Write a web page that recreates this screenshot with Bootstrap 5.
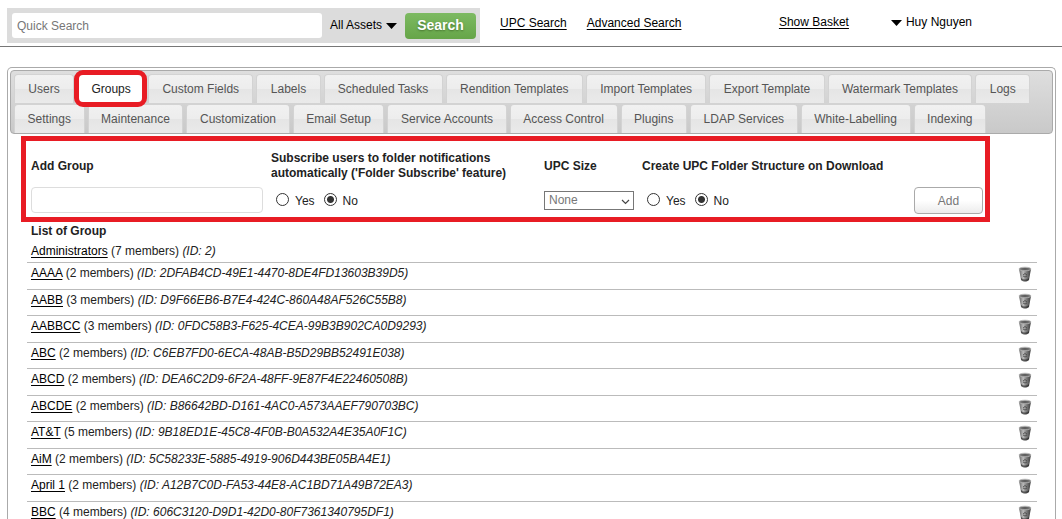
<!DOCTYPE html>
<html lang="en">
<head>
<meta charset="utf-8">
<meta name="viewport" content="width=device-width, initial-scale=1">
<title>Groups</title>
<link href="https://cdn.jsdelivr.net/npm/bootstrap@5.3.0/dist/css/bootstrap.min.css" rel="stylesheet">
<style>
body{font-family:"Liberation Sans",Arial,sans-serif;font-size:12px;line-height:15px;color:#222;background:#fff}
a,a:hover{color:#000}
.topbar{height:47px;border-bottom:1px solid #777;padding-left:7px}
.searchbox{background:#dcdcdc;height:35px;margin-top:8px;width:473px;padding:0 4px 0 5px}
.searchbox .form-control{height:25px;width:310px;font-size:12px;border:0;border-radius:3px;padding:0 5px;color:#555}
.form-control::placeholder{color:#777}
.plain{background:none;border:0;padding:0;color:#000;white-space:nowrap}
.caretdown{width:11px;height:6px;flex:none}
.btn-search{width:71px;height:26px;padding:0;border:0;border-radius:4px;background:linear-gradient(#7dba62,#66a548);color:#fff;font-size:14px;font-weight:bold;text-shadow:0 1px 2px #47742f}
.toplinks{padding-top:16px}
.toplinks a,.account a{text-underline-offset:2px}
.account{padding-right:90px;gap:42px;padding-top:15px}
.frame{margin:20px 6px 0 7px;border:1px solid #aaa;border-bottom:0;border-radius:5px 5px 0 0;padding:2px 2px 0}
.tabstrip{border:1px solid #aaa;border-radius:4px;background:linear-gradient(#dedede,#c9c9c9);padding:3px 0 0 3px;row-gap:1px}
.tabrow{gap:3px;padding-right:22px}
.tabrow + .tabrow{padding-right:66px}
.tabrow a{flex:1 1 auto;text-align:center;height:29px;line-height:28px;padding:0 12px;border:1px solid #d3d3d3;border-bottom:0;border-radius:4px 4px 0 0;background:linear-gradient(#f1f1f1 0,#ededed 50%,#e5e5e5 51%,#eaeaea);color:#555;text-decoration:none;white-space:nowrap}
.tabrow a.current{position:relative;background:#fff;color:#212121}
.tabrow a.current::after{content:"";position:absolute;inset:-5px -3px -4px -4px;border:5px solid #e81c24;border-radius:9px}
.addform{margin:2px 63px 0 11px;border:5px solid #e81c24;padding:0 2px 3px 5px;height:86px}
.addgrid{display:grid;grid-template-columns:240fr 273fr 98fr 272fr 69px;grid-template-rows:46px 27px}
.addgrid .head{font-weight:bold;align-self:center;padding-top:4px}
.addgrid .form-control{width:232px;height:26px;padding:0 5px;font-size:12px;border:1px solid #ddd;border-radius:4px}
.radios{gap:6px;padding:0 0 2px 5px}
.radios input{appearance:none;width:13px;height:13px;margin:0;border:1px solid #333;border-radius:50%;background:#fff}
.radios input:checked{background:radial-gradient(circle,#333 0 3px,#fff 4px)}
.radios label{padding-top:3px;margin-right:3px}
.sizebox{position:relative;width:90px;height:19px}
.sizebox select{appearance:none;display:block;width:90px;height:19px;padding:0 4px;border:1px solid #777;border-radius:0;background:#fff;color:#777;line-height:15px}
.sizebox svg{position:absolute;right:4px;top:8px;width:9px;height:6px;pointer-events:none}
.btn-add{width:69px;height:27px;padding:0;font-size:12px;color:#777;border:1px solid #aaa;border-radius:4px;background:linear-gradient(#fff 50%,#ececec)}
.groups{margin:2px 16px 0 17px}
.groups h1{font-size:12px;line-height:15px;font-weight:bold;margin:0;padding:0 4px 5px}
.groups li{height:26px;padding:3px 5px 0 4px;border-top:1px solid #bbb}
.groups li:nth-child(even){height:27px}
.groups li:first-child{height:18px;padding-top:0;border:0}
.groups a{text-underline-offset:2px}
.trash{width:14px;height:17px}
</style>
</head>
<body>
<svg class="position-absolute" width="0" height="0" aria-hidden="true">
<defs><linearGradient id="metal"><stop offset="0" stop-color="#666"/><stop offset=".35" stop-color="#bbb"/><stop offset=".6" stop-color="#808080"/><stop offset="1" stop-color="#3c3c3c"/></linearGradient></defs>
<symbol id="bin" viewBox="0 0 14 17"><path d="M1 3 3 14Q7 17 11 14L13 3Z" fill="url(#metal)"/><path d="M3 12Q7 15 11 12L11 14Q7 17 3 14Z" fill="#222" opacity=".6"/><ellipse cx="7" cy="3" rx="6" ry="1.800" fill="#777" stroke="#b5b5b5" stroke-width=".8"/><path d="M3 3Q7 1.500 11 3Q7 4.500 3 3" fill="#555"/><path d="M5 9Q7 6 9 9M5 10 7 11 9 10" stroke="#444" stroke-width=".8" fill="none"/></symbol>
<symbol id="down" viewBox="0 0 11 6"><path d="M0 0H11L5.500 6Z"/></symbol>
</svg>
<header class="topbar d-flex align-items-start">
<form class="searchbox d-flex align-items-center justify-content-between">
<input class="form-control" type="search" placeholder="Quick Search" aria-label="Quick Search">
<button type="button" class="plain d-flex align-items-center gap-1">All Assets <svg class="caretdown"><use href="#down"/></svg></button>
<button type="submit" class="btn btn-search">Search</button>
</form>
<nav class="toplinks d-flex flex-grow-1">
<a href="#" class="ms-3 ps-1">UPC Search</a><a href="#" class="ms-3 ps-1">Advanced Search</a>
</nav>
<nav class="account d-flex"><a href="#">Show Basket</a><button type="button" class="plain d-flex align-items-center gap-1"><svg class="caretdown"><use href="#down"/></svg>Huy Nguyen</button></nav>
</header>
<main class="frame">
<nav class="tabstrip d-flex flex-column" aria-label="Administration">
<div class="tabrow d-flex"><a href="#">Users</a><a href="#" class="current" aria-current="page">Groups</a><a href="#">Custom Fields</a><a href="#">Labels</a><a href="#">Scheduled Tasks</a><a href="#">Rendition Templates</a><a href="#">Import Templates</a><a href="#">Export Template</a><a href="#">Watermark Templates</a><a href="#">Logs</a></div>
<div class="tabrow d-flex"><a href="#">Settings</a><a href="#">Maintenance</a><a href="#">Customization</a><a href="#">Email Setup</a><a href="#">Service Accounts</a><a href="#">Access Control</a><a href="#">Plugins</a><a href="#">LDAP Services</a><a href="#">White-Labelling</a><a href="#">Indexing</a></div>
</nav>
<form class="addform">
<div class="addgrid">
<label class="head" for="gname">Add Group</label>
<div class="head" id="sub">Subscribe users to folder notifications<br>automatically ('Folder Subscribe' feature)</div>
<label class="head" for="usize">UPC Size</label>
<div class="head" id="upc">Create UPC Folder Structure on Download</div>
<span></span>
<input class="form-control" id="gname" type="text">
<div class="radios d-flex align-items-center" role="radiogroup" aria-labelledby="sub"><input type="radio" name="s" id="sy"><label for="sy">Yes</label><input type="radio" name="s" id="sn" checked><label for="sn">No</label></div>
<div class="sizebox align-self-center"><select id="usize"><option>None</option></select><svg viewBox="0 0 9 6"><path d="M1 1 4.500 4.500 8 1" fill="none" stroke="#444" stroke-width="1.200"/></svg></div>
<div class="radios d-flex align-items-center" role="radiogroup" aria-labelledby="upc"><input type="radio" name="u" id="uy"><label for="uy">Yes</label><input type="radio" name="u" id="un" checked><label for="un">No</label></div>
<button type="submit" class="btn btn-add">Add</button>
</div>
</form>
<section class="groups">
<h1>List of Group</h1>
<ul class="list-unstyled mb-0">
<li><a href="#">Administrators</a> (7 members) <i>(ID: 2)</i></li>
<li class="d-flex justify-content-between"><span><a href="#">AAAA</a> (2 members) <i>(ID: 2DFAB4CD-49E1-4470-8DE4FD13603B39D5)</i></span><button class="plain d-flex" aria-label="Delete"><svg class="trash"><use href="#bin"/></svg></button></li>
<li class="d-flex justify-content-between"><span><a href="#">AABB</a> (3 members) <i>(ID: D9F66EB6-B7E4-424C-860A48AF526C55B8)</i></span><button class="plain d-flex" aria-label="Delete"><svg class="trash"><use href="#bin"/></svg></button></li>
<li class="d-flex justify-content-between"><span><a href="#">AABBCC</a> (3 members) <i>(ID: 0FDC58B3-F625-4CEA-99B3B902CA0D9293)</i></span><button class="plain d-flex" aria-label="Delete"><svg class="trash"><use href="#bin"/></svg></button></li>
<li class="d-flex justify-content-between"><span><a href="#">ABC</a> (2 members) <i>(ID: C6EB7FD0-6ECA-48AB-B5D29BB52491E038)</i></span><button class="plain d-flex" aria-label="Delete"><svg class="trash"><use href="#bin"/></svg></button></li>
<li class="d-flex justify-content-between"><span><a href="#">ABCD</a> (2 members) <i>(ID: DEA6C2D9-6F2A-48FF-9E87F4E22460508B)</i></span><button class="plain d-flex" aria-label="Delete"><svg class="trash"><use href="#bin"/></svg></button></li>
<li class="d-flex justify-content-between"><span><a href="#">ABCDE</a> (2 members) <i>(ID: B86642BD-D161-4AC0-A573AAEF790703BC)</i></span><button class="plain d-flex" aria-label="Delete"><svg class="trash"><use href="#bin"/></svg></button></li>
<li class="d-flex justify-content-between"><span><a href="#">AT&amp;T</a> (5 members) <i>(ID: 9B18ED1E-45C8-4F0B-B0A532A4E35A0F1C)</i></span><button class="plain d-flex" aria-label="Delete"><svg class="trash"><use href="#bin"/></svg></button></li>
<li class="d-flex justify-content-between"><span><a href="#">AiM</a> (2 members) <i>(ID: 5C58233E-5885-4919-906D443BE05BA4E1)</i></span><button class="plain d-flex" aria-label="Delete"><svg class="trash"><use href="#bin"/></svg></button></li>
<li class="d-flex justify-content-between"><span><a href="#">April 1</a> (2 members) <i>(ID: A12B7C0D-FA53-44E8-AC1BD71A49B72EA3)</i></span><button class="plain d-flex" aria-label="Delete"><svg class="trash"><use href="#bin"/></svg></button></li>
<li class="d-flex justify-content-between"><span><a href="#">BBC</a> (4 members) <i>(ID: 606C3120-D9D1-42D0-80F7361340795DF1)</i></span><button class="plain d-flex" aria-label="Delete"><svg class="trash"><use href="#bin"/></svg></button></li>
</ul>
</section>
</main>
</body>
</html>
